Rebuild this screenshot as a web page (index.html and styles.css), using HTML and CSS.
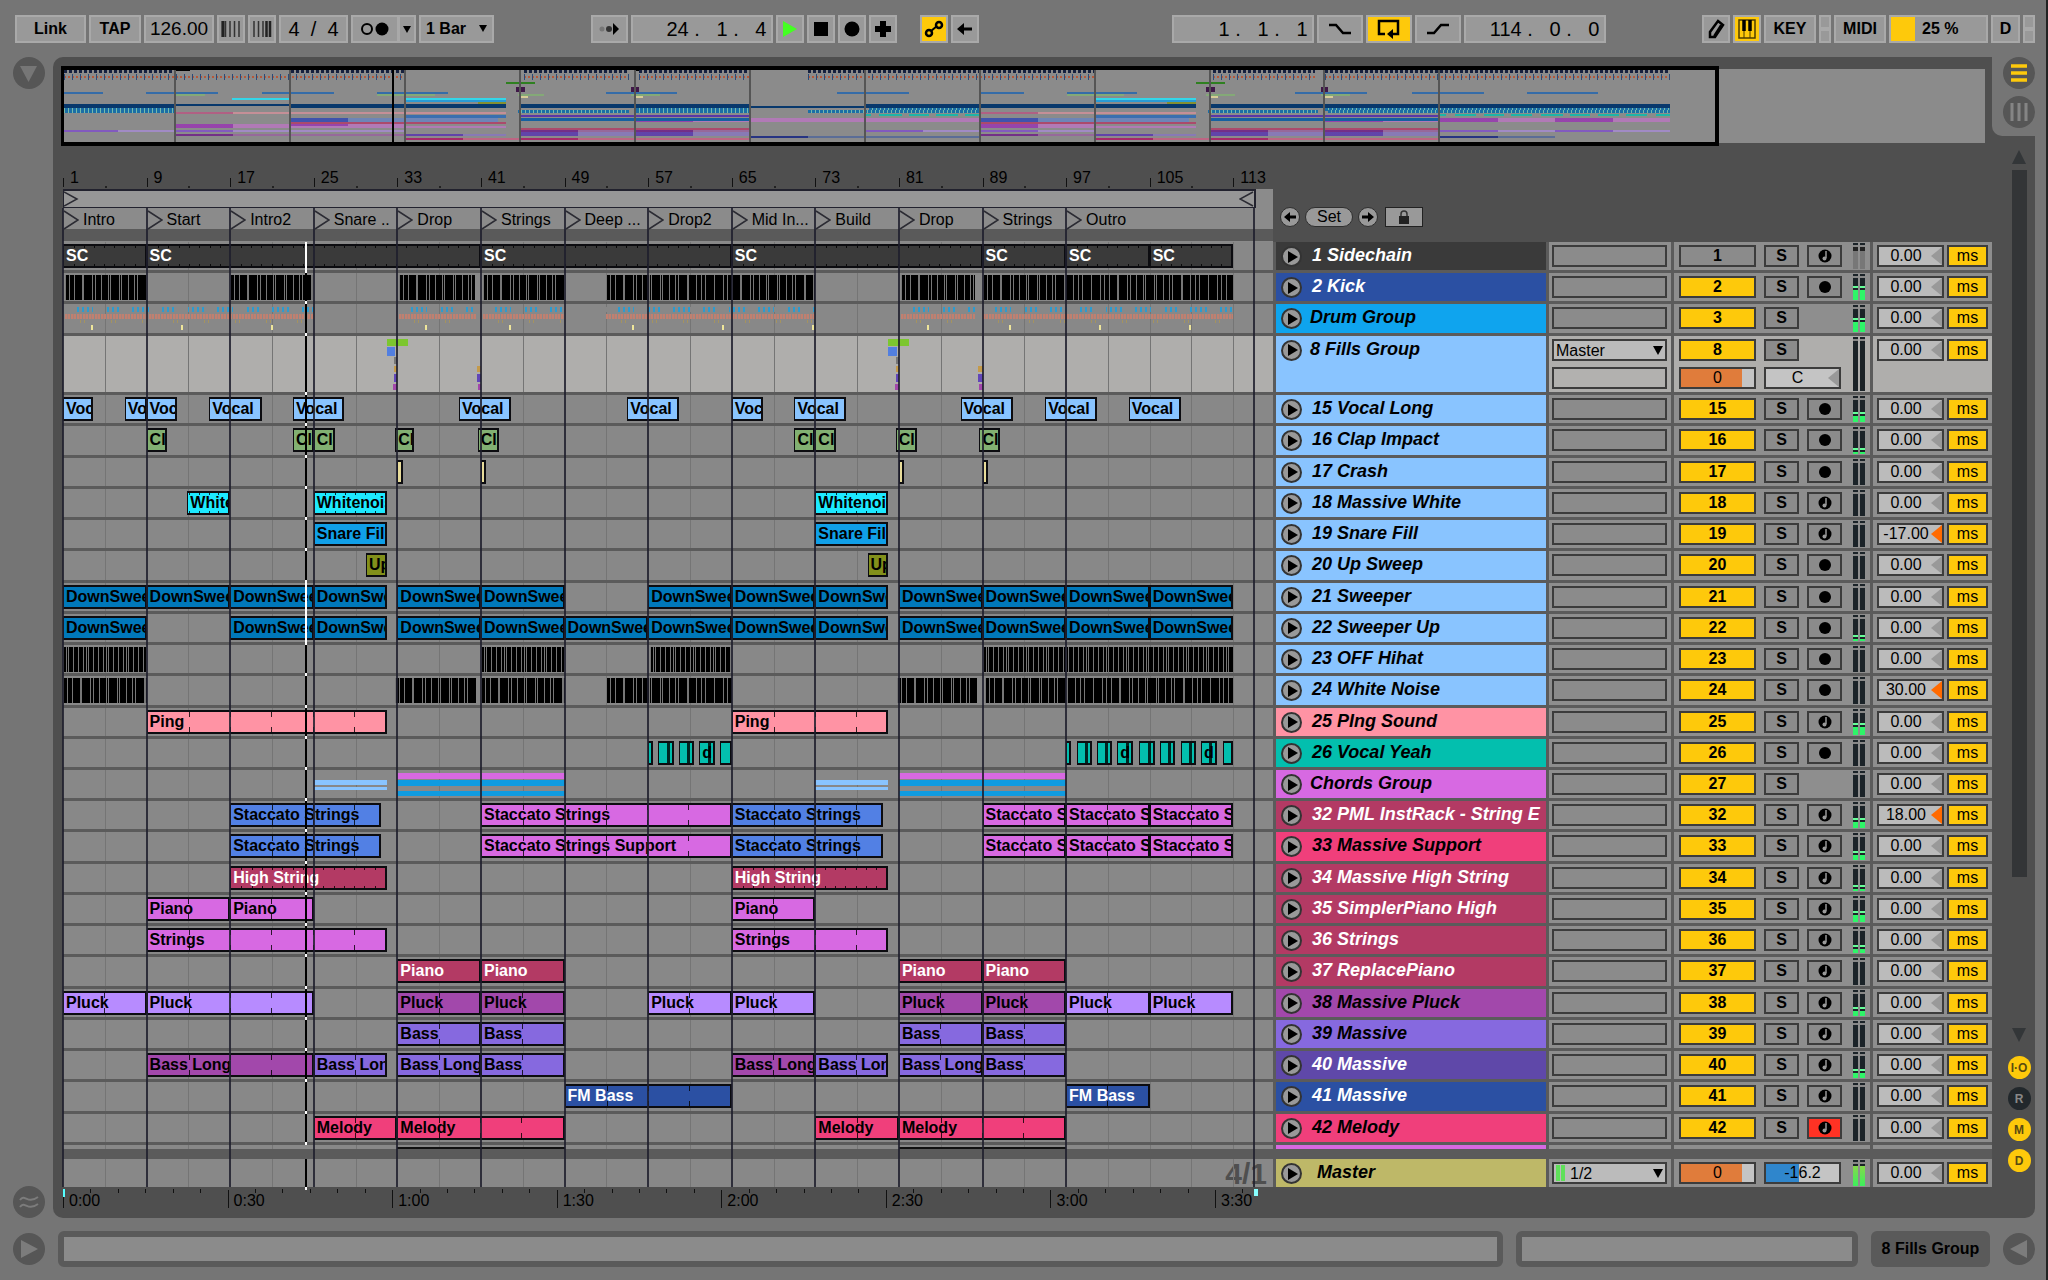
FILE: index.html
```html
<!DOCTYPE html>
<html lang="en">
<head>
  <meta charset="UTF-8" />
  <title>Arrangement</title>
  <link rel="stylesheet" href="styles.css">
</head>
<body>
  <header class="toolbar">
    <div class="group">
      <button class="btn w-link">Link</button>
      <button class="btn w-tap">TAP</button>
      <input class="btn lcd w-tempo" aria-label="Tempo" value="126.00">
      <button class="btn w-icon" aria-label="Nudge down"><svg width="20" height="18"><path d="M1.5 1v16M4.500 1v16M9 1v16M13.500 1v16M18 1v16" stroke="#333" stroke-width="1.500"/><path d="M2 1v16" stroke="#222" stroke-width="3"/></svg></button>
      <button class="btn w-icon" aria-label="Nudge up"><svg width="20" height="18"><path d="M2 1v16M6.500 1v16M11 1v16" stroke="#333" stroke-width="1.500"/><path d="M14.500 1v16M18 1v16" stroke="#222" stroke-width="2.500"/></svg></button>
      <input class="btn lcd w-sig" aria-label="Time signature" value="4&nbsp; /&nbsp; 4">
      <button class="btn w-metro" aria-label="Metronome"><svg width="30" height="16"><circle cx="7" cy="8" r="5" fill="none" stroke="#000" stroke-width="2"/><circle cx="22" cy="8" r="6.500"/></svg></button><button class="btn w-drop" aria-label="Metronome options"><svg width="8" height="7"><path d="M0 0h8L4 7z"/></svg></button>
      <div class="pick w-bar"><select aria-label="Quantization"><option>1 Bar</option></select></div>
    </div>
    <div class="spacer"></div>
    <div class="group">
      <button class="btn w-follow" aria-label="Follow"><svg width="20" height="14"><circle cx="3" cy="7" r="2.500" fill="#777"/><circle cx="10" cy="7" r="3" fill="#333"/><path d="M14 1l6 6-6 6z"/></svg></button>
      <input class="btn lcd w-pos" aria-label="Position" value="24 .&nbsp;&nbsp; 1 .&nbsp;&nbsp; 4">
      <button class="btn w-icon" aria-label="Play"><svg width="16" height="18"><path d="M1 1l14 8-14 8z" fill="#4f2"/></svg></button>
      <button class="btn w-icon" aria-label="Stop"><svg width="14" height="14"><path d="M0 0h14v14H0z"/></svg></button>
      <button class="btn w-icon" aria-label="Record"><svg width="16" height="16"><circle cx="8" cy="8" r="7.500"/></svg></button>
      <button class="btn w-icon" aria-label="Overdub"><svg width="16" height="16"><path d="M5 0h6v5h5v6h-5v5H5v-5H0V5h5z"/></svg></button>
      <button class="btn w-icon on auto" aria-label="Automation arm"><svg width="20" height="18"><path d="M7 11l6-5" stroke="#000" stroke-width="2"/><g fill="none" stroke="#000" stroke-width="2.500"><circle cx="5" cy="13" r="3"/><circle cx="15" cy="5" r="3"/></g></svg></button>
      <button class="btn w-icon" aria-label="Re-enable automation"><svg width="16" height="14"><path d="M0 7l7-6v4.500h8v3H7V13z"/></svg></button>
    </div>
    <div class="spacer wide"></div>
    <div class="group">
      <input class="btn lcd w-start" aria-label="Loop start" value="1 .&nbsp;&nbsp; 1 .&nbsp;&nbsp; 1">
      <button class="btn w-loop" aria-label="Punch in"><svg width="24" height="14"><path d="M1 3h7l7 8h8" fill="none" stroke="#000" stroke-width="2.500"/></svg></button>
      <button class="btn w-loop on" aria-label="Loop"><svg width="24" height="20"><path d="M8 15H2V2h19v13h-6" fill="none" stroke="#000" stroke-width="2.500"/><path d="M10 15l6-5v10z"/></svg></button>
      <button class="btn w-loop" aria-label="Punch out"><svg width="24" height="14"><path d="M1 11h7l7-8h8" fill="none" stroke="#000" stroke-width="2.500"/></svg></button>
      <input class="btn lcd w-start" aria-label="Loop length" value="114 .&nbsp;&nbsp; 0 .&nbsp;&nbsp; 0">
    </div>
    <div class="spacer"></div>
    <div class="group">
      <button class="btn w-icon" aria-label="Draw mode"><svg width="18" height="20"><path d="M11 2l5 4-8 12H3v-5z" fill="none" stroke="#000" stroke-width="2.500"/><path d="M14 6L7 17" stroke="#000" stroke-width="2"/></svg></button>
      <button class="btn w-icon on" aria-label="Computer keyboard"><svg width="18" height="20"><path d="M1 1h16v18H1z" fill="none" stroke="#4d3c00" stroke-width="1.500"/><path d="M6 1v18M12 1v18" stroke="#4d3c00"/><path d="M6 1v11M12 1v11" stroke="#000" stroke-width="3.500"/></svg></button>
      <button class="btn w-key">KEY</button>
      <div class="leds"><i></i><i></i></div>
      <button class="btn w-midi">MIDI</button>
      <div class="btn cpu"><i></i><span>25 %</span></div>
      <button class="btn w-disk">D</button>
      <div class="leds"><i></i><i></i></div>
    </div>
  </header>

  <main class="workspace">
    <nav class="rail">
      <button class="round" aria-label="Show browser"><svg width="20" height="20"><path d="M1 3h17L9.500 19z" fill="#767676"/></svg></button>
      <button class="round" aria-label="Groove pool"><svg width="22" height="18"><path d="M2 7c5-7 7 5 18-3M2 14c5-7 7 5 18-3" fill="none" stroke="#7c7c7c" stroke-width="2"/></svg></button>
    </nav>

    <section class="panel">
      <div class="panel-top">
        <div class="overview" id="overview"></div>
        <div class="views">
          <button class="round" aria-label="Arrangement view"><svg width="16" height="18"><path d="M0 2h16M0 9h16M0 16h16" stroke="#fec90b" stroke-width="3.500"/></svg></button>
          <button class="round" aria-label="Session view"><svg width="18" height="18"><path d="M2 0v18M9 0v18M16 0v18" stroke="#858585" stroke-width="3"/></svg></button>
        </div>
      </div>

      <div class="panel-body">
        <div class="arrangement">
          <div class="head">
            <div class="head-time">
              <div class="ruler" id="ruler"></div>
              <div class="scrub">
                <div class="scrub-loop">
                  <svg width="15" height="16"><path d="M0 1l13 7-13 7" fill="none" stroke="#2b2b33" stroke-width="1.500"/></svg>
                  <svg width="15" height="16"><path d="M14 1L1 8l13 7" fill="none" stroke="#2b2b33" stroke-width="1.500"/></svg>
                </div>
              </div>
              <div class="locators" id="locators"></div>
            </div>
            <div class="set-bar">
              <button class="pill small" aria-label="Previous locator"><svg width="12" height="10"><path d="M0 5l6-5v3.500h6v3H6V10z"/></svg></button>
              <button class="pill">Set</button>
              <button class="pill small" aria-label="Next locator"><svg width="12" height="10"><path d="M12 5L6 0v3.500H0v3h6V10z"/></svg></button>
              <button class="lock" aria-label="Lock envelopes"><svg width="12" height="14"><path d="M3 7V4a3 3 0 016 0v3" fill="none" stroke="#333" stroke-width="1.500"/><path d="M1 6h10v8H1z" fill="#222"/></svg></button>
            </div>
          </div>
          <div class="tracks" id="tracks"></div>
          <div class="row master">
            <div class="lane"><span class="zoom-ratio">4/1</span></div>
            <div class="name"><button class="fold" aria-label="Unfold Master"><svg width="10" height="12"><path d="M0 0l10 6-10 6z"/></svg></button>&nbsp;Master</div>
            <div class="io"><div class="pick out"><i class="mini"></i><select aria-label="Master output"><option>1/2</option></select></div></div>
            <div class="mixer">
              <div class="line">
                <input class="box vol" aria-label="Master volume" value="0">
                <input class="box cue" aria-label="Cue volume" value="-16.2">
              </div>
              <div class="meter hot"><i><b></b></i><i><b></b></i></div>
            </div>
            <div class="delay"><div class="field"><input aria-label="Master delay" value="0.00"></div><button class="ms">ms</button></div>
          </div>
          <div class="clock" id="clock"></div>
          <div class="gridlines" id="gridlines"></div>
        </div>

        <aside class="side">
          <svg class="arrow" width="14" height="14"><path d="M7 0l7 14H0z" fill="#333638"/></svg>
          <div class="scrollbar"><i></i></div>
          <svg class="arrow" width="14" height="14"><path d="M0 0h14L7 14z" fill="#333638"/></svg>
          <button class="dot">I·O</button>
          <button class="dot off">R</button>
          <button class="dot">M</button>
          <button class="dot">D</button>
        </aside>
      </div>
    </section>
  </main>

  <footer class="status">
    <button class="round" aria-label="Show info"><svg width="18" height="18"><path d="M1 0l17 9-17 9z" fill="#7c7c7c"/></svg></button>
    <div class="well"></div>
    <div class="well short"></div>
    <button class="device">8 Fills Group</button>
    <button class="round" aria-label="Show clip view"><svg width="18" height="18"><path d="M17 0L0 9l17 9z" fill="#7c7c7c"/></svg></button>
  </footer>

  <script src="script.js"></script>
</body>
</html>
```

FILE: styles.css
```css
* {
  box-sizing: border-box;
}
body {
  margin: 0;
  height: 100vh;
  display: flex;
  flex-direction: column;
  overflow: hidden;
  background: #757575;
  color: #000;
  font: 16px/20px "Liberation Sans", Arial, sans-serif;
  border-right: 2px solid #222;
}
button, input, select {
  font: inherit;
  color: inherit;
  margin: 0;
  padding: 0;
  border-radius: 0;
}
svg {
  display: block;
  flex: none;
}

/* toolbar */
.toolbar {
  display: flex;
  height: 57px;
  padding: 15px 11px 0 15px;
}
.spacer {
  flex: 1;
}
.spacer.wide {
  flex: 2;
}
.group {
  display: flex;
  gap: 3px;
}
.btn {
  height: 28px;
  display: flex;
  align-items: center;
  justify-content: center;
  background: #999;
  border: 2px solid #a9a9a9;
  font-weight: bold;
}
.btn.on {
  background: #fec90b;
}
.lcd {
  font-size: 20px;
  font-weight: normal;
  text-align: center;
}
.w-link { width: 71px; }
.w-tap { width: 52px; }
.w-tempo { width: 70px; font-size: 19px; }
.w-icon { width: 28px; }
.w-sig { width: 69px; }
.w-metro { width: 48px; }
.w-drop { width: 18px; margin-left: -4px; }
.w-bar { width: 75px; }
.w-follow { width: 37px; }
.w-pos { width: 142px; text-align: right; padding-right: 4px; }
.w-start { width: 142px; text-align: right; padding-right: 4px; }
.w-loop { width: 46px; }
.w-key { width: 52px; }
.w-midi { width: 52px; }
.w-disk { width: 29px; }
.auto {
  margin-left: 20px;
}
.pick {
  position: relative;
  display: flex;
}
.pick select {
  appearance: none;
  width: 100%;
  height: 28px;
  padding-left: 5px;
  background: #999;
  border: 2px solid #a9a9a9;
  font-weight: bold;
}
.pick::after {
  content: "";
  position: absolute;
  right: 7px;
  top: 10px;
  border: 4px solid transparent;
  border-top: 7px solid #000;
  border-bottom: 0;
}
.leds {
  width: 12px;
  display: flex;
  flex-direction: column;
}
.leds i {
  height: 14px;
  background: #999;
  border: 2px solid #a9a9a9;
}
.cpu {
  width: 99px;
  justify-content: flex-start;
}
.cpu i {
  width: 24px;
  height: 24px;
  background: #fec90b;
  margin-right: 7px;
}
.round {
  width: 32px;
  height: 32px;
  border: 0;
  border-radius: 50%;
  background: #565656;
  display: flex;
  align-items: center;
  justify-content: center;
}

/* main panel */
.workspace {
  flex: 1;
  min-height: 0;
  display: flex;
  padding-right: 11px;
}
.rail {
  width: 53px;
  padding-left: 13px;
  display: flex;
  flex-direction: column;
  justify-content: space-between;
}
.panel {
  flex: 1;
  min-width: 0;
  display: flex;
  flex-direction: column;
  background: #4f4f4f;
  border-radius: 10px 0 10px 10px;
}
.panel-top {
  display: flex;
  height: 89px;
}
.overview {
  position: relative;
  flex: 1;
  height: 80px;
  margin: 9px 7px 0 8px;
  background: #8b8b8b;
  border: solid #4f4f4f;
  border-width: 3px 0;
}
.overview i {
  position: absolute;
}
.overview .ov-line {
  top: 0;
  bottom: 0;
  width: 2px;
  margin-left: -2px;
  background: #555;
}
.overview .ov-head {
  background: #000;
}
.overview .ov-frame {
  left: 0;
  top: -3px;
  bottom: -3px;
  border: 4px solid #000;
  border-left-width: 3px;
}
.views {
  width: 43px;
  height: 79px;
  padding-left: 11px;
  display: flex;
  flex-direction: column;
  gap: 7px;
  background: #757575;
  border-bottom-left-radius: 10px;
}
.panel-body {
  flex: 1;
  min-height: 0;
  display: flex;
  padding-left: 10px;
}
.arrangement {
  position: relative;
  flex: 1;
  min-width: 0;
  display: flex;
  flex-direction: column;
}
.head {
  display: flex;
}
.head-time {
  flex: 1;
  height: 96px;
  border-bottom: 1px solid #8a8a8a;
  background: #5a5a5a;
}
.ruler, .clock {
  position: relative;
  height: 43px;
  background: #4f4f4f;
}
.ruler span {
  position: absolute;
  bottom: 0;
  height: 21px;
  padding-left: 7px;
}
.ruler span::before {
  content: "";
  position: absolute;
  left: 0;
  top: 10px;
  height: 9px;
  border-left: 1px solid #111;
}
.ruler i {
  position: absolute;
  bottom: 1px;
  width: 2px;
  height: 2px;
  background: #222;
}
.scrub {
  height: 19px;
  background: #8b8b8b;
}
.scrub-loop {
  width: 98.6%;
  height: 19px;
  display: flex;
  justify-content: space-between;
  background: #979797;
  border: 1px solid #22222e;
  border-width: 2px 2px 1px 1px;
}
.locators {
  position: relative;
  height: 21px;
  background: #8b8b8b;
}
.locator {
  position: absolute;
  top: 2px;
  display: flex;
  gap: 4px;
  white-space: nowrap;
}
.set-bar {
  width: 719px;
  padding: 61px 0 0 7px;
  display: flex;
  align-items: flex-start;
  gap: 5px;
}
.pill {
  height: 20px;
  width: 48px;
  line-height: 16px;
  background: #999;
  border: 1px solid #2f2f2f;
  border-radius: 10px;
}
.pill.small {
  width: 20px;
  padding: 0 3px;
}
.lock {
  width: 38px;
  height: 20px;
  margin-left: 2px;
  background: #999;
  border: 1px solid #222;
  display: flex;
  align-items: center;
  justify-content: center;
}

/* tracks */
.tracks {
  flex: 1;
  min-height: 0;
  display: flex;
  flex-direction: column;
  background: #5f5f5f;
  overflow: hidden;
}
.row {
  flex: 28 1 0;
  min-height: 0;
  display: flex;
  gap: 3px;
  padding-bottom: 3px;
  background: #5b5b5b;
}
.row.tall {
  flex-grow: 56;
}
.row.sliver {
  flex: 0 0 4px;
  padding: 0;
  overflow: hidden;
}
.lane {
  position: relative;
  flex: 1;
  background: #888;
}
.tall .lane, .tall .io, .tall .mixer, .tall .delay {
  background: #afaeac;
}
.clip {
  position: absolute;
  top: 2px;
  height: 24px;
  border: 2px solid #0c0c10;
  border-left-width: 1px;
  padding-left: 2px;
  overflow: hidden;
  white-space: nowrap;
  font-weight: bold;
  z-index: 2;
}
.clip i {
  position: absolute;
  width: 1px;
  top: 0;
  bottom: 0;
  border: solid rgba(0, 0, 0, 0.8);
  border-width: 5px 0;
}
.clip.dots i {
  border-width: 2px 0;
}
.light {
  color: #fff;
}
.bars {
  position: absolute;
  top: 2px;
  height: 25px;
  z-index: 2;
  background:
    repeating-linear-gradient(90deg, #777 0 1px, transparent 1px 9px),
    repeating-linear-gradient(90deg, transparent 0 4px, #777 4px 5px, transparent 5px 13px),
    #000;
}
.bars.fast {
  background:
    repeating-linear-gradient(90deg, #777 0 1px, transparent 1px 5px),
    repeating-linear-gradient(90deg, transparent 0 3px, #777 3px 4px, transparent 4px 20px),
    #000;
}
.mark {
  position: absolute;
  z-index: 2;
}
.drums {
  position: absolute;
  top: 3px;
  height: 23px;
  z-index: 2;
  background:
    repeating-linear-gradient(90deg, #888 0 11px, transparent 11px 28px) 0 0 / 100% 5px,
    repeating-linear-gradient(90deg, transparent 0 2px, #2c9bd0 2px 4px, transparent 4px 5px) 0 0 / 100% 5px,
    repeating-linear-gradient(90deg, #c08070 0 2px, #a4837c 2px 3px, #c08070 3px 5px, #888 5px 6px) 0 7px / 100% 5px,
    repeating-linear-gradient(90deg, transparent 0 15px, #a5935f 15px 16px, transparent 16px 19px, #a5935f 19px 20px, transparent 20px 31px) 0 13px / 100% 3px,
    repeating-linear-gradient(90deg, transparent 0 26px, #eee59a 26px 28px, transparent 28px 90px) 0 18px / 100% 5px;
  background-repeat: repeat-x;
}
.playhead {
  position: absolute;
  top: 0;
  bottom: -3px;
  width: 2px;
  background: #000;
  border-bottom: 3px solid #fff;
  z-index: 4;
}
.playhead.inv {
  background: #fff;
}
.name {
  width: 270px;
  display: flex;
  gap: 10px;
  padding: 3px 0 0 5px;
  font-size: 18px;
  line-height: 21px;
  font-weight: bold;
  font-style: italic;
  white-space: nowrap;
  overflow: hidden;
}
.name.grp {
  gap: 8px;
}
.fold {
  flex: none;
  width: 21px;
  height: 21px;
  margin-top: 1px;
  padding-left: 5px;
  border: 2px solid #333;
  border-radius: 50%;
  background: #999;
}
.io, .mixer, .delay {
  background: #8e8e8e;
}
.io {
  width: 122px;
  padding: 3px 4px 0 3px;
}
.io .pick select {
  height: 22px;
  padding-left: 2px;
  background: #bbb;
  border: 2px solid #3c3c3c;
  font-weight: normal;
}
.io .pick::after {
  right: 4px;
  top: 7px;
  border-width: 9px 5px 0;
}
.box, .act, .solo, .arm, .ms {
  height: 22px;
  border: 2px solid #3c3c3c;
  background: #8b8b8b;
}
.io .box + .box, .io .pick + .box {
  margin-top: 6px;
}
.tall .io .box {
  background: #b2b1af;
}
.mixer {
  width: 196px;
  padding: 3px 0 0 5px;
  display: flex;
  gap: 11px;
}
.line {
  display: flex;
  flex-wrap: wrap;
  align-content: flex-start;
  gap: 6px 8px;
  width: 163px;
}
.act {
  width: 77px;
  line-height: 18px;
  background: #fec90b;
  font-weight: bold;
}
.act.off {
  background: #8b8b8b;
}
.solo, .arm {
  width: 35px;
  line-height: 18px;
  font-weight: bold;
}
.arm {
  display: flex;
  align-items: center;
  justify-content: center;
}
.arm.rec {
  background: #ff3224;
}
.mixer input.box {
  text-align: center;
  width: 77px;
}
.mixer input.vol {
  background: linear-gradient(90deg, #e07c3b 84%, #c4c4c4 84%);
}
.mixer input.cue {
  background: linear-gradient(90deg, #2f86cc 45%, #c4c4c4 45%);
}
.pan {
  position: relative;
}
.pan input.box {
  background: #c4c4c4;
  padding-right: 10px;
}
.pan::after, .field::after {
  content: "";
  position: absolute;
  right: 2px;
  top: 2px;
  border: solid transparent;
  border-width: 9px 11px 9px 0;
  border-right-color: #999;
}
.meter {
  display: flex;
  gap: 2px;
  width: 12px;
  margin-top: -2px;
  padding-bottom: 1px;
}
.meter i {
  flex: 1;
  display: flex;
  align-items: flex-end;
  background: #1b2328;
  border-top: 2px solid #1b2328;
  box-shadow: inset 0 2px #888;
}
.meter b {
  width: 100%;
  background: linear-gradient(#6f9 0 2px, #1b2328 2px 4px, #2ef568 4px);
}
.meter.dim i {
  background: linear-gradient(#222 0 6px, #777 6px);
}
.meter.hot b {
  height: 85%;
  background: linear-gradient(#86d84c, #3cf05c);
}
.delay {
  width: 119px;
  padding: 3px 0 0 4px;
  display: flex;
  gap: 3px;
}
.field {
  position: relative;
  width: 67px;
  height: 22px;
}
.field input {
  width: 67px;
  height: 22px;
  border: 2px solid #3c3c3c;
  background: #bbb;
  text-align: center;
  padding-right: 9px;
}
.field.moved::after {
  border-right-color: #ff6a00;
}
.ms {
  width: 41px;
  line-height: 16px;
  background: #fec90b;
}

/* master + time */
.master {
  flex: 0 0 38px;
  padding: 10px 0 0;
}
.master .name {
  background: #beb868;
}
.master .pick i {
  position: absolute;
  left: 4px;
  top: 3px;
  width: 9px;
  height: 16px;
  border: solid #5fe05a;
  border-width: 0 4px;
}
.master .pick select {
  padding-left: 16px;
}
.zoom-ratio {
  position: absolute;
  right: 6px;
  top: 1px;
  font-size: 30px;
  line-height: 28px;
  font-weight: bold;
  color: #4f4f4f;
}
.clock {
  height: 31px;
  margin-right: 719px;
}
.clock span {
  position: absolute;
  top: 3px;
  height: 18px;
  padding-left: 5px;
  border-left: 1px solid #111;
  line-height: 22px;
}
.clock i {
  position: absolute;
  top: 2px;
  width: 1px;
  height: 4px;
  background: #111;
}
.gridlines {
  position: absolute;
  top: 62px;
  bottom: 31px;
  left: 0;
  right: 719px;
  z-index: 3;
  pointer-events: none;
}
.gridlines i {
  position: absolute;
  top: 0;
  bottom: 0;
  width: 2px;
  margin-left: -1px;
  background: rgba(30, 30, 45, 0.85);
}
.lane .thin {
  position: absolute;
  top: 0;
  bottom: 0;
  width: 1px;
  background: #757575;
  z-index: 1;
}

/* right side */
.side {
  width: 43px;
  padding: 4px 0 46px 11px;
  display: flex;
  flex-direction: column;
  align-items: center;
}
.scrollbar {
  flex: 1;
  width: 15px;
  margin: 6px 0;
}
.scrollbar i {
  display: block;
  height: 83%;
  background: #333537;
}
.dot {
  width: 23px;
  height: 23px;
  margin-top: 8px;
  border: 0;
  border-radius: 50%;
  background: #fec90b;
  color: #5a4a10;
  font-size: 12px;
  line-height: 22px;
  font-weight: bold;
}
.dot:first-of-type {
  margin-top: 14px;
}
.dot.off {
  background: #22282c;
  color: #888;
}

/* footer */
.status {
  display: flex;
  align-items: center;
  gap: 13px;
  height: 62px;
  padding: 0 11px 0 13px;
}
.well {
  flex: 1;
  height: 36px;
  background: #8b8b8b;
  border: 6px solid #5a5a5a;
  border-radius: 6px;
}
.well.short {
  flex: 0 0 342px;
}
.device {
  width: 119px;
  height: 36px;
  background: #5a5a5a;
  border: 0;
  border-radius: 6px;
  font-weight: bold;
}
```

FILE: script.js
```js
const BARS = 115.8;
const OV_BARS = 133.9;
const PLAYHEAD = 24.15;
const pct = (bar, total = BARS) => ((bar - 1) / total * 100) + "%";
const span = (a, b, total = BARS) => `left:${pct(a, total)};width:${(b - a) / total * 100}%`;

const SKY = "#89c4ff", ROSE = "#b33a64", PINK = "#f03f7b", ORCHID = "#d769e2";
const PLUM = "#a248ab", LILAC = "#b78bff", VIOLET = "#8669df", BLUE = "#5280e4", NAVY = "#2b50a3";
const SWEEP = "#0078ba", CYAN = "#1de9ff", TEAL = "#03bfae";

const blocks = (label, color, list) => list.map(c => [c[0], c[1], c[2] || label, c[3] || color]);

// kind: clip | dots | ticks | bars | fast ; clips are [start, end, label, color]
const tracks = [
  { n: 1, name: "1 Sidechain", color: "#3a3a3a", light: 1, arm: "midi", off: 1, kind: "dots", inv: 1,
    clips: blocks("SC", "#3a3a3a", [[1, 9], [9, 41], [41, 65], [65, 89], [89, 97], [97, 105], [105, 113]]) },
  { n: 2, name: "2 Kick", color: NAVY, light: 1, arm: "audio", level: 60, kind: "bars",
    clips: [[1.2, 8.9], [17, 24.9], [33.2, 40.4], [41.2, 48.9], [53, 73], [81.2, 88.3], [89, 113]] },
  { n: 3, name: "Drum Group", color: "#0fa4ee", group: 1, level: 55, kind: "drums",
    clips: [[1.2, 24.9], [33.2, 40.5], [41.2, 48.9], [53, 73], [81.2, 88.3], [89, 113]] },
  { n: 8, name: "8 Fills Group", color: SKY, group: 1, tall: 1,
    marks: [33, 81].flatMap(b => [
      [b - 1, b + 1, 3, 7, "#7cc62f"], [b - 1, b - 0.2, 11, 9, "#527fe0"], [b - 0.3, b, 21, 7, "#777"],
      [b - 0.3, b, 30, 6, "#c49a4a"], [b - 0.3, b, 38, 8, "#6146b8"], [b - 0.4, b, 48, 6, PLUM],
      [b + 7.6, b + 8, 30, 6, "#c49a4a"], [b + 7.6, b + 8, 38, 8, "#6146b8"], [b + 7.7, b + 8, 48, 6, PLUM]]) },
  { n: 15, name: "15 Vocal Long", color: SKY, arm: "audio", level: 45,
    clips: blocks("Vocal", SKY, [[1, 3.9], [6.9, 9], [9, 11.9], [15, 20], [23, 27.9], [38.9, 43.9], [55, 60], [65, 68], [71, 75.9], [86.9, 91.9], [95, 100], [103, 108]]) },
  { n: 16, name: "16 Clap Impact", color: SKY, arm: "audio", level: 25,
    clips: blocks("Clap", "#82b072", [[9, 11], [23, 25], [25, 27], [32.8, 34.6], [40.7, 42.7], [71, 73], [73, 75], [80.7, 82.7], [88.7, 90.7]]) },
  { n: 17, name: "17 Crash", color: SKY, arm: "audio",
    clips: blocks("", "#e8dc9a", [[33, 33.5], [41, 41.5], [81, 81.5], [89, 89.5]]) },
  { n: 18, name: "18 Massive White", color: SKY, arm: "midi", kind: "dots",
    clips: blocks("Whitenoise", CYAN, [[12.9, 17], [25, 32], [73, 80]]) },
  { n: 19, name: "19 Snare Fill", color: SKY, arm: "midi", delay: "-17.00",
    clips: blocks("Snare Fill", "#109fe8", [[25, 32], [73, 80]]) },
  { n: 20, name: "20 Up Sweep", color: SKY, arm: "audio",
    clips: blocks("Up Sweep", "#82901b", [[30, 32], [78, 80]]) },
  { n: 21, name: "21 Sweeper", color: SKY, arm: "audio", inv: 1,
    clips: blocks("DownSweep", SWEEP, [[1, 9], [9, 17], [17, 25], [25, 32], [33, 41], [41, 49], [57, 65], [65, 73], [73, 80], [81, 89], [89, 97], [97, 105], [105, 113]]) },
  { n: 22, name: "22 Sweeper Up", color: SKY, arm: "audio", level: 25, inv: 1,
    clips: blocks("DownSweep", SWEEP, [[1, 9], [17, 25], [25, 32], [33, 41], [41, 49], [49, 57], [57, 65], [65, 73], [73, 80], [81, 89], [89, 97], [97, 105], [105, 113]]) },
  { n: 23, name: "23 OFF Hihat", color: SKY, arm: "audio", kind: "fast",
    clips: [[1, 9], [41, 49], [57.2, 64.9], [89, 113]] },
  { n: 24, name: "24 White Noise", color: SKY, arm: "audio", delay: "30.00", kind: "bars",
    clips: [[1, 9], [32.8, 40.5], [41, 49], [53, 65], [80.8, 88.5], [89.2, 113]] },
  { n: 25, name: "25 PIng Sound", color: "#ff93a4", arm: "midi", level: 50, kind: "ticks",
    clips: blocks("Ping", "#ff93a4", [[9, 32], [65, 80]]) },
  { n: 26, name: "26 Vocal Yeah", color: TEAL, arm: "audio", kind: "yeah",
    clips: blocks("", TEAL, [[57, 57.4], [57.9, 59.5], [60, 61.4], [61.9, 63.4, "d"], [63.9, 65], [97, 97.4], [98, 99.5], [100, 101.4], [101.9, 103.4, "d"], [104, 105.5], [106, 107.4], [108, 109.4], [109.9, 111.4, "d"], [112, 113]]) },
  { n: 27, name: "Chords Group", color: ORCHID, group: 1,
    marks: [25, 73].flatMap(b => [
      [b, b + 7, 10, 5, SKY], [b, b + 7, 17, 3, SKY],
      [b + 8, b + 24, 3, 6, ORCHID], [b + 8, b + 24, 10, 6, "#0f9be0"], [b + 8, b + 24, 21, 5, "#0f9be0"]]) },
  { n: 32, name: "32 PML InstRack - String E", color: ROSE, light: 1, arm: "midi", level: 45, delay: "18.00", kind: "ticks",
    clips: blocks("Staccato Strings", ORCHID, [[17, 31.4, 0, BLUE], [41, 65], [65, 79.5, 0, BLUE], [89, 97], [97, 105], [105, 113]]) },
  { n: 33, name: "33 Massive Support", color: PINK, arm: "midi", level: 35, kind: "ticks",
    clips: blocks("Staccato Strings Support", ORCHID, [[17, 31.4, "Staccato Strings", BLUE], [41, 65], [65, 79.5, "Staccato Strings", BLUE], [89, 97], [97, 105], [105, 113]]) },
  { n: 34, name: "34 Massive High String", color: ROSE, light: 1, arm: "midi", level: 25, kind: "dots",
    clips: blocks("High String", ROSE, [[17, 32], [65, 80]]) },
  { n: 35, name: "35 SimplerPiano High", color: ROSE, light: 1, arm: "midi", level: 45, kind: "ticks",
    clips: blocks("Piano", ORCHID, [[9, 17], [17, 25], [65, 73]]) },
  { n: 36, name: "36 Strings", color: ROSE, light: 1, arm: "midi", level: 35, kind: "ticks",
    clips: blocks("Strings", ORCHID, [[9, 32], [65, 80]]) },
  { n: 37, name: "37 ReplacePiano", color: ROSE, light: 1, arm: "midi",
    clips: blocks("Piano", ROSE, [[33, 41], [41, 49], [81, 89], [89, 97]]) },
  { n: 38, name: "38 Massive Pluck", color: PLUM, arm: "midi", level: 35, kind: "ticks",
    clips: blocks("Pluck", LILAC, [[1, 9], [9, 25], [33, 41, 0, PLUM], [41, 49, 0, PLUM], [57, 65], [65, 73], [81, 89, 0, PLUM], [89, 97, 0, PLUM], [97, 105], [105, 113]]) },
  { n: 39, name: "39 Massive", color: VIOLET, arm: "midi", kind: "ticks",
    clips: blocks("Bass", VIOLET, [[33, 41], [41, 49], [81, 89], [89, 97]]) },
  { n: 40, name: "40 Massive", color: "#5f48a9", light: 1, arm: "midi", level: 40, kind: "ticks",
    clips: blocks("Bass Long", VIOLET, [[9, 25, 0, PLUM], [25, 32], [33, 41], [41, 49, "Bass"], [65, 73, 0, PLUM], [73, 80], [81, 89], [89, 97, "Bass"]]) },
  { n: 41, name: "41 Massive", color: NAVY, light: 1, arm: "midi", kind: "ticks",
    clips: blocks("FM Bass", NAVY, [[49, 65], [97, 105]]) },
  { n: 42, name: "42 Melody", color: PINK, arm: "midi", rec: 1, kind: "ticks",
    clips: blocks("Melody", PINK, [[25, 33], [33, 49], [73, 81], [81, 97]]) },
];

const WHITE_TEXT = ["#3a3a3a", ROSE, NAVY];

function drawClip(t, [a, b, label, color]) {
  if (t.kind === "bars" || t.kind === "fast" || t.kind === "drums") {
    const cls = t.kind === "fast" ? "bars fast" : t.kind;
    return `<div class="${cls}" style="${span(a, b)}"></div>`;
  }
  let ticks = "";
  if (t.kind === "ticks" || t.kind === "dots") {
    const step = t.kind === "ticks" ? 4 : 1;
    for (let x = Math.floor(a) + step; x < b; x += step) {
      ticks += `<i style="left:${(x - a) / (b - a) * 100}%"></i>`;
    }
  }
  if (t.kind === "yeah" && b - a > 1.2) {
    ticks = `<i style="left:60%;border-width:10px 0;width:3px"></i>`;
  }
  const light = WHITE_TEXT.includes(color) ? " light" : "";
  return `<div class="clip ${t.kind || ""}${light}" style="${span(a, b)};background:${color}">${ticks}${label}</div>`;
}

function drawMark([a, b, top, height, color]) {
  return `<div class="mark" style="${span(a, b)};top:${top}px;height:${height}px;background:${color}"></div>`;
}

const thin = [5, 13, 21, 29, 37, 45, 53, 61, 69, 77, 85, 93, 101, 105, 109, 113]
  .map(b => `<i class="thin" style="left:${pct(b)}"></i>`).join("");
const head = inv => `<i class="playhead${inv ? " inv" : ""}" style="left:${pct(PLAYHEAD)}"></i>`;

const armIcon = {
  midi: `<svg width="14" height="14"><circle cx="7" cy="7" r="6.500"/><path d="M8 2v7" stroke="#999" stroke-width="1.500"/><circle cx="6.500" cy="9.500" r="2" fill="#999"/></svg>`,
  audio: `<svg width="14" height="14"><circle cx="7" cy="7" r="6"/></svg>`,
};

function drawTrack(t) {
  const clips = (t.clips || []).map(c => drawClip(t, c)).join("") + (t.marks || []).map(drawMark).join("");
  const arm = t.arm ? `<button class="arm${t.rec ? " rec" : ""}" aria-label="Arm ${t.name}">${armIcon[t.arm]}</button>` : "";
  const bar = t.level ? `<b style="height:${t.level}%"></b>` : "";
  const io = t.tall
    ? `<div class="pick"><select aria-label="Output ${t.name}"><option>Master</option></select></div><div class="box"></div>`
    : `<div class="box"></div>`;
  const extra = t.tall
    ? `<input class="box vol" aria-label="Volume" value="0"><div class="pan"><input class="box" aria-label="Pan" value="C"></div>`
    : "";
  // group headers have no arm button, so the second line wraps on its own
  return `<div class="row${t.tall ? " tall" : ""}">
    <div class="lane">${thin}${clips}${head(t.inv)}</div>
    <div class="name${t.group ? " grp" : ""}${t.light ? " light" : ""}" style="background:${t.color}"><button class="fold" aria-label="Unfold ${t.name}"><svg width="10" height="12"><path d="M0 0l10 6-10 6z"/></svg></button>${t.name}</div>
    <div class="io">${io}</div>
    <div class="mixer">
      <div class="line"><button class="act${t.off ? " off" : ""}">${t.n}</button><button class="solo">S</button>${arm}${extra}</div>
      <div class="meter${t.off ? " dim" : ""}"><i>${bar}</i><i>${bar}</i></div>
    </div>
    <div class="delay"><div class="field${t.delay ? " moved" : ""}"><input aria-label="Delay ${t.name}" value="${t.delay || "0.00"}"></div><button class="ms">ms</button></div>
  </div>`;
}

// next track peeks out at the bottom of the list
const sliver = `<div class="row sliver"><div class="lane">${thin}${[[33, 49], [81, 97]].map(c => `<div class="mark" style="${span(...c)};top:2px;height:2px;background:#111"></div>`).join("")}</div>
  <div class="name" style="background:${ORCHID}"></div><div class="io"></div><div class="mixer"></div><div class="delay"></div></div>`;
document.getElementById("tracks").innerHTML = tracks.map(drawTrack).join("") + sliver;
document.querySelector(".master .lane").insertAdjacentHTML("afterbegin", thin + head());

// ruler
let ruler = "";
for (let b = 1; b <= 113; b += 8) {
  ruler += `<span style="left:${pct(b)}">${b}</span>`;
  if (b < 113) ruler += `<i style="left:${pct(b + 4)}"></i>`;
}
document.getElementById("ruler").innerHTML = ruler;

const names = ["Intro", "Start", "Intro2", "Snare ..", "Drop", "Strings", "Deep ...", "Drop2", "Mid In...", "Build", "Drop", "Strings", "Outro"];
document.getElementById("locators").innerHTML = names.map((n, i) =>
  `<div class="locator" style="left:${pct(1 + i * 8)}"><svg width="16" height="20"><path d="M1 1l14 9-14 9" fill="none" stroke="#2b2b33" stroke-width="1.500"/></svg>${n}</div>`).join("");

document.getElementById("gridlines").innerHTML =
  names.map((n, i) => `<i style="left:${pct(1 + i * 8)}"></i>`).join("") + `<i style="left:${pct(115)}"></i>`;

// time scale, 126 bpm
let clock = "";
for (let s = 0; s <= 215; s += 5) {
  const left = pct(1 + s * 126 / 60 / 4);
  clock += s % 30 ? `<i style="left:${left}"></i>`
    : `<span style="left:${left}">${Math.floor(s / 60)}:${s % 60 ? "30" : "00"}</span>`;
}
clock += `<i style="left:0;width:2px;height:8px;background:#5ff"></i><i style="left:${pct(115)};width:4px;height:7px;background:#8ff"></i>`;
document.getElementById("clock").innerHTML = clock;

// overview
let ov = "";
const piece = (a, b, top, h, color, o = 1) => {
  ov += `<i style="${span(a, b, OV_BARS)};top:${top}px;height:${h}px;background:${color};opacity:${o}"></i>`;
};
tracks.forEach((t, i) => {
  const top = 23 + (i - 4) * 2;
  (t.clips || []).forEach(([a, b, , color]) => {
    if (i === 0) return piece(a, a + 1, 0, 2, "#000");
    if (i === 1) return piece(a, b, 1, 3, "repeating-linear-gradient(90deg,#16213f 0 3px,#8b8b8b 3px 5px)");
    if (i === 2) {
      piece(a, b, 7, 2, "repeating-linear-gradient(90deg,#b5583a 0 2px,#8b8b8b 2px 4px)");
      return piece(a, b, 5, 6, "repeating-linear-gradient(90deg,#2b4a78 0 1px,transparent 1px 8px)");
    }
    if (t.kind === "bars" || t.kind === "fast") return piece(a, b, top, 3, "repeating-linear-gradient(90deg,#1b6ea6 0 3px,#7ba 3px 4px)");
    if (color === SWEEP) return piece(a, b, top, 2, "#08386c");
    if (color === SKY) return piece(a, b, top, 2, "#356ca8");
    if (t.kind === "ticks") {
      piece(a, Math.min(b, a + 4), top, 2, `linear-gradient(rgba(30,0,70,.35) 0 100%),${color}`);
      if (b > a + 4) piece(a + 4, b, top, 2, color, 0.5);
      return;
    }
    piece(a, b, top, 2, color, 0.8);
  });
});
[33, 81].forEach(b => {
  piece(b - 1, b + 1, 13, 2, "#2f8020");
  piece(b - 0.3, b + 0.3, 18, 5, "#401848");
  piece(b + 7.7, b + 8.2, 18, 5, "#401848");
  piece(b, b + 16, 46, 2, "#5a36a8");
  piece(b, b + 16, 49, 3, "#1560a0");
  piece(b - 8, b - 1, 46, 3, "#3a6fb0");
});
for (let b = 9; b <= 97; b += 8) {
  ov += `<i class="ov-line" style="left:${pct(b, OV_BARS)}"></i>`;
}
ov += `<i class="ov-line ov-head" style="left:${pct(PLAYHEAD, OV_BARS)}"></i><i class="ov-frame" style="width:${pct(116.4, OV_BARS)}"></i>`;
document.getElementById("overview").innerHTML = ov;
```
